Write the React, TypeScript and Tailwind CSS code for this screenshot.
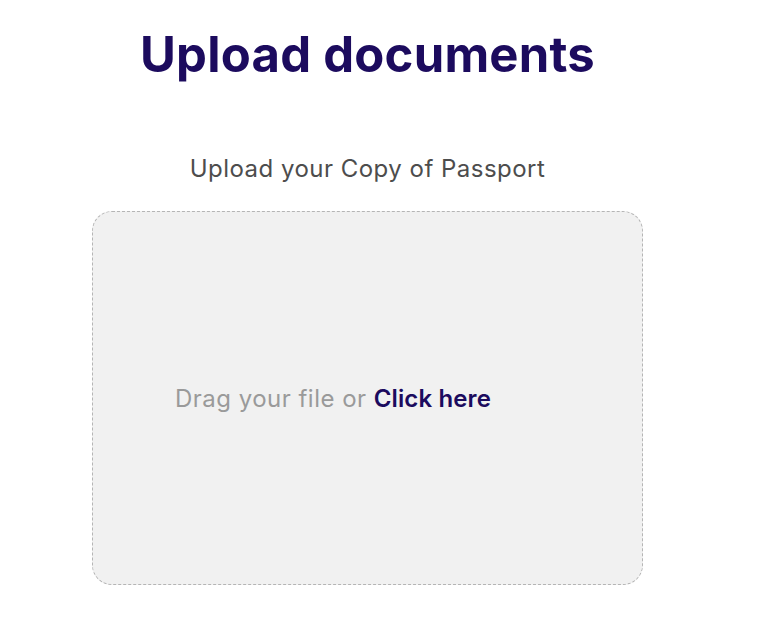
import { memo } from 'react'
import type { FC } from 'react'

const App: FC = () => {
  return (
    <div
      className="w-[735px] flex flex-col items-center bg-white"
      style={{ fontFamily: 'Inter, "Noto Sans", sans-serif' }}
    >
      {/* title */}
      <h1 className="mt-[30px] text-[49px] leading-none font-bold tracking-[0.005em] text-[#1c0b5e]">
        Upload documents
      </h1>

      <p className="mt-[78px] text-[24px] leading-none tracking-[0.02em] text-[#4d4d4d]">
        Upload your Copy of Passport
      </p>

      {/* drop zone */}
      <div className="mt-[30px] w-[551px] h-[374px] flex items-center rounded-[20px] border border-dashed border-[#b5b5b5] bg-[#f1f1f1] pl-[82px] pt-[2px]">
        <span className="text-[24px] leading-none tracking-[0.02em] text-[#9a9a9a]">
          Drag your file or{' '}
          <a className="font-semibold tracking-[0.005em] text-[#1c0b5e] cursor-pointer">Click here</a>
        </span>
      </div>
    </div>
  )
}

export default memo(App)
